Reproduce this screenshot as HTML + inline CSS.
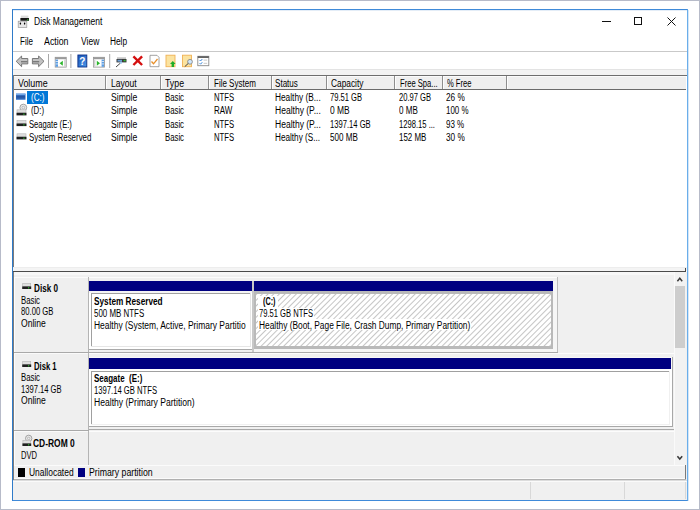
<!DOCTYPE html>
<html><head><meta charset="utf-8">
<style>
*{margin:0;padding:0;box-sizing:border-box}
html,body{width:700px;height:510px;overflow:hidden;background:#fff}
body{position:relative;font-family:"Liberation Sans",sans-serif;font-size:8.5px;color:#000}
.a{position:absolute}
.t{position:absolute;white-space:nowrap;line-height:10px;transform-origin:0 0}
svg{position:absolute;overflow:visible}
</style></head><body>

<div class="a" style="left:0px;top:0px;width:700px;height:1px;background:#b7bbc9;"></div>
<div class="a" style="left:0px;top:0px;width:1px;height:510px;background:#b7bbc9;"></div>
<div class="a" style="left:699px;top:0px;width:1px;height:510px;background:#b7bbc9;"></div>
<div class="a" style="left:0px;top:509px;width:700px;height:1px;background:#b7bbc9;"></div>
<div class="a" style="left:12px;top:9px;width:676px;height:492px;background:#fff;border:1px solid #3f8ad9;border-left-color:#2f7bc9;border-right-color:#6aaeea;"></div>
<div class="a" style="left:688px;top:10px;width:1px;height:491px;background:#d4e6f8;"></div>
<div class="a" style="left:13px;top:10px;width:674px;height:1px;background:#e4edf7;"></div>
<div class="t" style="left:33.6px;top:17.34px;font-size:10px;transform:scaleX(0.8486);">Disk Management</div>
<svg style="left:0;top:0" width="40" height="30">
<rect x="20.8" y="15.6" width="7.6" height="2.4" fill="#dcdcdc"/>
<rect x="20.4" y="18" width="8.6" height="2.8" fill="#161616"/>
<path d="M26.3 20.6 L28.3 18.4 L28.3 20.6Z" fill="#38b038"/>
<rect x="18.2" y="21.2" width="8.6" height="6.2" fill="#e6e6e6" stroke="#9a9a9a" stroke-width="0.7"/>
<ellipse cx="20.4" cy="23.6" rx="0.7" ry="1.1" fill="#000"/>
<ellipse cx="24.6" cy="23.6" rx="0.7" ry="1.1" fill="#000"/>
</svg>
<div class="a" style="left:602px;top:21px;width:8.5px;height:1px;background:#111;"></div>
<div class="a" style="left:634px;top:17px;width:8px;height:8px;border:1px solid #111;"></div>
<svg style="left:667px;top:17px" width="9" height="9"><path d="M0.5 0.5L8.5 8.5M8.5 0.5L0.5 8.5" stroke="#111" stroke-width="1"/></svg>
<div class="t" style="left:19.8px;top:37.44px;font-size:10px;transform:scaleX(0.8000);">File</div>
<div class="t" style="left:44.2px;top:37.44px;font-size:10px;transform:scaleX(0.8813);">Action</div>
<div class="t" style="left:80.7px;top:37.44px;font-size:10px;transform:scaleX(0.8502);">View</div>
<div class="t" style="left:110.2px;top:37.44px;font-size:10px;transform:scaleX(0.8311);">Help</div>
<div class="a" style="left:13px;top:51px;width:674px;height:1px;background:#c9c9c9;"></div>
<div class="a" style="left:13px;top:69px;width:674px;height:1px;background:#e3e3e3;"></div>
<div class="a" style="left:13px;top:70px;width:674px;height:5px;background:#f3f3f3;"></div>
<svg style="left:0;top:0" width="700" height="80">
<!-- back -->
<path d="M16.2 61.3 L21.6 56 L21.6 58.5 L27.8 58.5 L27.8 63.9 L21.6 63.9 L21.6 66.7 Z" fill="#c2c2c2" stroke="#6e6e6e" stroke-width="0.9" stroke-linejoin="round"/>
<rect x="21" y="61" width="6.5" height="1.4" fill="#7a7a7a"/>
<!-- forward -->
<path d="M44 61.3 L38.6 56 L38.6 58.5 L32.4 58.5 L32.4 63.9 L38.6 63.9 L38.6 66.7 Z" fill="#c2c2c2" stroke="#6e6e6e" stroke-width="0.9" stroke-linejoin="round"/>
<rect x="32.7" y="61" width="6.5" height="1.4" fill="#7a7a7a"/>
<rect x="48" y="54" width="1" height="14" fill="#a8a8a8"/>
<!-- console tree -->
<defs><linearGradient id="hg" x1="0" y1="0" x2="1" y2="1"><stop offset="0" stop-color="#1b55b8"/><stop offset="1" stop-color="#4a98e8"/></linearGradient></defs>
<rect x="55.2" y="57.3" width="11" height="9.8" fill="#fff" stroke="#8f8f8f" stroke-width="0.8"/>
<rect x="55.2" y="57.3" width="11" height="1.9" fill="#9a9a9a"/>
<rect x="55.6" y="59.6" width="2.4" height="7.2" fill="#5c9ee4"/>
<rect x="55.6" y="61.2" width="2.4" height="0.7" fill="#fff"/>
<rect x="55.6" y="63.6" width="2.4" height="0.7" fill="#fff"/>
<rect x="64.2" y="59.6" width="1.6" height="7.2" fill="#d0d0d0"/>
<path d="M59.6 63.2 L62.8 60.7 L62.8 65.7Z" fill="#2cb52c"/>
<rect x="70.4" y="54" width="1" height="14" fill="#a8a8a8"/>
<!-- help -->
<rect x="77.9" y="55" width="8.9" height="12" fill="url(#hg)" stroke="#0a2f88" stroke-width="0.9"/>
<text x="82.4" y="64.6" font-family="Liberation Sans" font-weight="bold" font-size="10" fill="#fff" text-anchor="middle">?</text>
<!-- action pane -->
<rect x="93.4" y="57.3" width="11" height="9.8" fill="#fff" stroke="#8f8f8f" stroke-width="0.8"/>
<rect x="93.4" y="57.3" width="11" height="1.9" fill="#9a9a9a"/>
<rect x="101.6" y="59.6" width="2.4" height="7.2" fill="#5c9ee4"/>
<rect x="101.6" y="61.2" width="2.4" height="0.7" fill="#fff"/>
<rect x="101.6" y="63.6" width="2.4" height="0.7" fill="#fff"/>
<rect x="93.8" y="59.6" width="1.6" height="7.2" fill="#d0d0d0"/>
<path d="M100 63.2 L96.8 60.7 L96.8 65.7Z" fill="#2cb52c"/>
<rect x="109.2" y="54" width="1" height="14" fill="#a8a8a8"/>
<!-- connect -->
<rect x="117" y="57.3" width="9" height="1.8" fill="#c4c4c4"/>
<rect x="116.5" y="59" width="10" height="3.4" fill="#3b3b3b"/>
<rect x="117.5" y="59.8" width="4.5" height="1.8" fill="#6aa0d8"/>
<rect x="123.6" y="59.9" width="2" height="1.4" fill="#2fc02f"/>
<path d="M116 67 L120.5 63" stroke="#444" stroke-width="1"/>
<circle cx="121" cy="62.6" r="1.2" fill="#9cc8f0"/>
<!-- red x -->
<path d="M133.4 56.4 L142.1 65 M142.1 56.4 L133.4 65" stroke="#d40f0f" stroke-width="2.4"/>
<!-- doc check -->
<path d="M150 55.3 L157 55.3 L159 57.3 L159 66.7 L150 66.7Z" fill="#fff" stroke="#8c8c8c" stroke-width="0.8"/>
<path d="M151.5 61.5 L153.5 63.8 L157.5 59" stroke="#e8902a" stroke-width="1.3" fill="none"/>
<!-- folder up -->
<rect x="166" y="55.2" width="9" height="11.5" fill="#fbe3a0" stroke="#f0b154" stroke-width="0.9"/>
<path d="M172.8 61 L175.6 64 L174 64 L174 67 L171.6 67 L171.6 64 L170 64Z" fill="#1fae2a"/>
<!-- folder find -->
<rect x="182.5" y="55.2" width="9" height="11.5" fill="#fbe3a0" stroke="#f0b154" stroke-width="0.9"/>
<circle cx="190" cy="61.8" r="2.4" fill="#cfe6fb" stroke="#8a8a8a" stroke-width="0.9"/>
<path d="M184.8 66.6 L188.3 63.4" stroke="#444" stroke-width="1"/>
<!-- properties -->
<rect x="197.8" y="56.3" width="11" height="9.4" fill="#fff" stroke="#8a8a8a" stroke-width="0.9"/>
<rect x="197.8" y="56.3" width="11" height="1.6" fill="#555"/>
<path d="M199.6 60 L200.6 61 L202.3 59" stroke="#2d7fd8" stroke-width="0.9" fill="none"/>
<path d="M199.6 63.2 L200.6 64.2 L202.3 62.2" stroke="#2d7fd8" stroke-width="0.9" fill="none"/>
<rect x="203.6" y="59.6" width="3.6" height="1" fill="#c8c8c8"/>
<rect x="203.6" y="62.8" width="3.6" height="1" fill="#c8c8c8"/>
</svg>
<div class="a" style="left:13px;top:75px;width:674px;height:1px;background:#6e6e6e;"></div>
<div class="a" style="left:13px;top:75px;width:1px;height:192px;background:#7c7c7c;"></div>
<div class="a" style="left:14px;top:76px;width:673px;height:191px;background:#fff;"></div>
<div class="a" style="left:14px;top:76px;width:672px;height:13px;background:#efefef;border-top:1px solid #fbfbfb;"></div>
<div class="a" style="left:14px;top:89px;width:672px;height:1px;background:#6b6b6b;"></div>
<div class="a" style="left:105px;top:76px;width:1px;height:13px;background:#8e8e8e;"></div>
<div class="a" style="left:106px;top:76px;width:1px;height:13px;background:#fdfdfd;"></div>
<div class="a" style="left:160px;top:76px;width:1px;height:13px;background:#8e8e8e;"></div>
<div class="a" style="left:161px;top:76px;width:1px;height:13px;background:#fdfdfd;"></div>
<div class="a" style="left:208px;top:76px;width:1px;height:13px;background:#8e8e8e;"></div>
<div class="a" style="left:209px;top:76px;width:1px;height:13px;background:#fdfdfd;"></div>
<div class="a" style="left:271px;top:76px;width:1px;height:13px;background:#8e8e8e;"></div>
<div class="a" style="left:272px;top:76px;width:1px;height:13px;background:#fdfdfd;"></div>
<div class="a" style="left:326px;top:76px;width:1px;height:13px;background:#8e8e8e;"></div>
<div class="a" style="left:327px;top:76px;width:1px;height:13px;background:#fdfdfd;"></div>
<div class="a" style="left:394px;top:76px;width:1px;height:13px;background:#8e8e8e;"></div>
<div class="a" style="left:395px;top:76px;width:1px;height:13px;background:#fdfdfd;"></div>
<div class="a" style="left:442px;top:76px;width:1px;height:13px;background:#8e8e8e;"></div>
<div class="a" style="left:443px;top:76px;width:1px;height:13px;background:#fdfdfd;"></div>
<div class="a" style="left:506px;top:76px;width:1px;height:13px;background:#8e8e8e;"></div>
<div class="a" style="left:507px;top:76px;width:1px;height:13px;background:#fdfdfd;"></div>
<div class="t" style="left:18.3px;top:79.33px;font-size:10px;transform:scaleX(0.8876);">Volume</div>
<div class="t" style="left:110.7px;top:79.33px;font-size:10px;transform:scaleX(0.8526);">Layout</div>
<div class="t" style="left:164.9px;top:79.33px;font-size:10px;transform:scaleX(0.8766);">Type</div>
<div class="t" style="left:213.6px;top:79.33px;font-size:10px;transform:scaleX(0.8004);">File System</div>
<div class="t" style="left:275.1px;top:79.33px;font-size:10px;transform:scaleX(0.8078);">Status</div>
<div class="t" style="left:330.6px;top:79.33px;font-size:10px;transform:scaleX(0.8329);">Capacity</div>
<div class="t" style="left:399.6px;top:79.33px;font-size:10px;transform:scaleX(0.7620);">Free Spa...</div>
<div class="t" style="left:447.1px;top:79.33px;font-size:10px;transform:scaleX(0.7603);">% Free</div>
<div class="a" style="left:27px;top:91px;width:21px;height:13px;background:#0078d7;"></div>
<div class="t" style="left:30.9px;top:93.03px;font-size:10px;transform:scaleX(0.8108);color:#fff;">(C:)</div>
<div class="t" style="left:110.7px;top:93.03px;font-size:10px;transform:scaleX(0.8602);">Simple</div>
<div class="t" style="left:164.9px;top:93.03px;font-size:10px;transform:scaleX(0.7771);">Basic</div>
<div class="t" style="left:213.6px;top:93.03px;font-size:10px;transform:scaleX(0.7701);">NTFS</div>
<div class="t" style="left:275.1px;top:93.03px;font-size:10px;transform:scaleX(0.8305);">Healthy (B...</div>
<div class="t" style="left:330.3px;top:93.03px;font-size:10px;transform:scaleX(0.7598);">79.51 GB</div>
<div class="t" style="left:399.3px;top:93.03px;font-size:10px;transform:scaleX(0.7598);">20.97 GB</div>
<div class="t" style="left:446.0px;top:93.03px;font-size:10px;transform:scaleX(0.8246);">26 %</div>
<div class="t" style="left:30.9px;top:106.23px;font-size:10px;transform:scaleX(0.7868);">(D:)</div>
<div class="t" style="left:110.7px;top:106.23px;font-size:10px;transform:scaleX(0.8602);">Simple</div>
<div class="t" style="left:164.9px;top:106.23px;font-size:10px;transform:scaleX(0.7771);">Basic</div>
<div class="t" style="left:213.6px;top:106.23px;font-size:10px;transform:scaleX(0.7974);">RAW</div>
<div class="t" style="left:275.1px;top:106.23px;font-size:10px;transform:scaleX(0.8525);">Healthy (P...</div>
<div class="t" style="left:330.3px;top:106.23px;font-size:10px;transform:scaleX(0.8437);">0 MB</div>
<div class="t" style="left:399.3px;top:106.23px;font-size:10px;transform:scaleX(0.8051);">0 MB</div>
<div class="t" style="left:446.0px;top:106.23px;font-size:10px;transform:scaleX(0.7937);">100 %</div>
<div class="t" style="left:28.7px;top:119.53px;font-size:10px;transform:scaleX(0.7640);">Seagate (E:)</div>
<div class="t" style="left:110.7px;top:119.53px;font-size:10px;transform:scaleX(0.8602);">Simple</div>
<div class="t" style="left:164.9px;top:119.53px;font-size:10px;transform:scaleX(0.7771);">Basic</div>
<div class="t" style="left:213.6px;top:119.53px;font-size:10px;transform:scaleX(0.7701);">NTFS</div>
<div class="t" style="left:275.1px;top:119.53px;font-size:10px;transform:scaleX(0.8525);">Healthy (P...</div>
<div class="t" style="left:330.3px;top:119.53px;font-size:10px;transform:scaleX(0.7625);">1397.14 GB</div>
<div class="t" style="left:399.3px;top:119.53px;font-size:10px;transform:scaleX(0.7615);">1298.15 ...</div>
<div class="t" style="left:446.0px;top:119.53px;font-size:10px;transform:scaleX(0.7982);">93 %</div>
<div class="t" style="left:28.7px;top:132.84px;font-size:10px;transform:scaleX(0.7906);">System Reserved</div>
<div class="t" style="left:110.7px;top:132.84px;font-size:10px;transform:scaleX(0.8602);">Simple</div>
<div class="t" style="left:164.9px;top:132.84px;font-size:10px;transform:scaleX(0.7771);">Basic</div>
<div class="t" style="left:213.6px;top:132.84px;font-size:10px;transform:scaleX(0.7701);">NTFS</div>
<div class="t" style="left:275.1px;top:132.84px;font-size:10px;transform:scaleX(0.8178);">Healthy (S...</div>
<div class="t" style="left:330.3px;top:132.84px;font-size:10px;transform:scaleX(0.8064);">500 MB</div>
<div class="t" style="left:399.3px;top:132.84px;font-size:10px;transform:scaleX(0.7948);">152 MB</div>
<div class="t" style="left:446.0px;top:132.84px;font-size:10px;transform:scaleX(0.8246);">30 %</div>
<svg style="left:0;top:0" width="100" height="150">
<rect x="16" y="93.6" width="9.5" height="6.2" fill="#3a78cc"/>
<rect x="16" y="93.6" width="9.5" height="1.3" fill="#7db0ea"/>
<rect x="16.3" y="95.8" width="8.9" height="0.8" fill="#1a3f86"/>
<rect x="16.3" y="97.5" width="8.9" height="0.8" fill="#1a3f86"/>
<circle cx="23.3" cy="107.6" r="3.4" fill="#ececec" stroke="#8e8e8e" stroke-width="0.8"/>
<circle cx="23.3" cy="107.6" r="1.4" fill="none" stroke="#9a9a9a" stroke-width="0.6"/>
<rect x="17.0" y="109.8" width="9" height="3" fill="#dedede" stroke="#b4b4b4" stroke-width="0.6"/><rect x="16.5" y="112.8" width="10" height="2.6" fill="#1e1e1e"/><rect x="23.3" y="113.6" width="1.2" height="1.2" fill="#2fc02f"/><rect x="17.0" y="120.5" width="9" height="3" fill="#dedede" stroke="#b4b4b4" stroke-width="0.6"/><rect x="16.5" y="123.5" width="10" height="2.6" fill="#1e1e1e"/><rect x="23.3" y="124.3" width="1.2" height="1.2" fill="#2fc02f"/><rect x="17.0" y="133.8" width="9" height="3" fill="#dedede" stroke="#b4b4b4" stroke-width="0.6"/><rect x="16.5" y="136.8" width="10" height="2.6" fill="#1e1e1e"/><rect x="23.3" y="137.60000000000002" width="1.2" height="1.2" fill="#2fc02f"/></svg>
<div class="a" style="left:13px;top:267px;width:674px;height:1px;background:#ededed;"></div>
<div class="a" style="left:13px;top:268px;width:674px;height:3px;background:#f4f4f4;"></div>
<div class="a" style="left:13px;top:271px;width:673px;height:1px;background:#4a4a4a;"></div>
<div class="a" style="left:685px;top:268px;width:1px;height:4px;background:#4a4a4a;"></div>
<div class="a" style="left:13px;top:272px;width:1px;height:208px;background:#7c7c7c;"></div>
<div class="a" style="left:14px;top:272px;width:673px;height:208px;background:#f0f0f0;"></div>
<div class="a" style="left:14px;top:272px;width:660px;height:3px;background:#f7f7f7;"></div>
<div class="a" style="left:674px;top:272px;width:12px;height:193px;background:#f2f2f2;"></div>
<div class="a" style="left:675px;top:286px;width:10px;height:62px;background:#cdcdcd;"></div>
<svg style="left:675px;top:276px" width="11" height="9"><path d="M2.4 5.2 L4.8 2.3 L7.2 5.2" stroke="#3a3a3a" stroke-width="1.5" fill="none"/></svg>
<div class="a" style="left:674px;top:272px;width:1px;height:193px;background:#fafafa;"></div>
<svg style="left:675px;top:453px" width="11" height="9"><path d="M2.4 3.2 L4.8 6.1 L7.2 3.2" stroke="#3a3a3a" stroke-width="1.5" fill="none"/></svg>
<div class="a" style="left:14px;top:277px;width:74px;height:75px;background:#efefef;border-top:1px solid #fafafa;border-left:1px solid #fdfdfd;"></div>
<div class="a" style="left:88px;top:277px;width:1px;height:75px;background:#b4b4b4;"></div>
<div class="a" style="left:14px;top:352px;width:75px;height:1px;background:#a9a9a9;"></div>
<div class="a" style="left:14px;top:353px;width:74px;height:77px;background:#efefef;border-top:1px solid #fafafa;border-left:1px solid #fdfdfd;"></div>
<div class="a" style="left:88px;top:353px;width:1px;height:77px;background:#b4b4b4;"></div>
<div class="a" style="left:14px;top:430px;width:75px;height:1px;background:#a9a9a9;"></div>
<div class="a" style="left:14px;top:431px;width:74px;height:34px;background:#efefef;border-top:1px solid #fafafa;border-left:1px solid #fdfdfd;"></div>
<div class="a" style="left:88px;top:431px;width:1px;height:34px;background:#b4b4b4;"></div>
<div class="a" style="left:14px;top:465px;width:75px;height:1px;background:#a9a9a9;"></div>
<div class="t" style="left:33.5px;top:283.94px;font-size:10px;transform:scaleX(0.8142);font-weight:bold;">Disk 0</div>
<div class="t" style="left:20.6px;top:295.84px;font-size:10px;transform:scaleX(0.7771);">Basic</div>
<div class="t" style="left:20.6px;top:307.34px;font-size:10px;transform:scaleX(0.7669);">80.00 GB</div>
<div class="t" style="left:20.6px;top:318.74px;font-size:10px;transform:scaleX(0.8581);">Online</div>
<div class="t" style="left:33.9px;top:361.54px;font-size:10px;transform:scaleX(0.7668);font-weight:bold;">Disk 1</div>
<div class="t" style="left:20.6px;top:373.14px;font-size:10px;transform:scaleX(0.7771);">Basic</div>
<div class="t" style="left:20.6px;top:384.64px;font-size:10px;transform:scaleX(0.7607);">1397.14 GB</div>
<div class="t" style="left:20.6px;top:396.14px;font-size:10px;transform:scaleX(0.8581);">Online</div>
<div class="t" style="left:33.3px;top:438.84px;font-size:10px;transform:scaleX(0.8433);font-weight:bold;">CD-ROM 0</div>
<div class="t" style="left:20.7px;top:450.64px;font-size:10px;transform:scaleX(0.7574);">DVD</div>
<svg style="left:0;top:0" width="100" height="480"><rect x="22.7" y="283.4" width="8" height="3" fill="#dedede" stroke="#b4b4b4" stroke-width="0.6"/><rect x="22.2" y="286.4" width="9" height="2.6" fill="#1e1e1e"/><rect x="28.0" y="287.2" width="1.2" height="1.2" fill="#2fc02f"/><rect x="22.7" y="361.4" width="8" height="3" fill="#dedede" stroke="#b4b4b4" stroke-width="0.6"/><rect x="22.2" y="364.4" width="9" height="2.6" fill="#1e1e1e"/><rect x="28.0" y="365.2" width="1.2" height="1.2" fill="#2fc02f"/><circle cx="28.7" cy="438.4" r="3.2" fill="#ececec" stroke="#8e8e8e" stroke-width="0.8"/><circle cx="28.7" cy="438.4" r="1.3" fill="none" stroke="#9a9a9a" stroke-width="0.6"/><rect x="22.9" y="440.4" width="7.800000000000001" height="3" fill="#dedede" stroke="#b4b4b4" stroke-width="0.6"/><rect x="22.4" y="443.4" width="8.8" height="2.6" fill="#1e1e1e"/><rect x="28.0" y="444.2" width="1.2" height="1.2" fill="#2fc02f"/></svg>
<div class="a" style="left:89px;top:277px;width:468px;height:75px;background:#f0f0f0;border-top:1px solid #fcfcfc;"></div>
<div class="a" style="left:557px;top:277px;width:1px;height:76px;background:#bdbdbd;"></div>
<div class="a" style="left:89px;top:352px;width:469px;height:1px;background:#a9a9a9;"></div>
<div class="a" style="left:89px;top:281px;width:163px;height:10px;background:#000080;"></div>
<div class="a" style="left:89px;top:291px;width:163px;height:58px;background:#fff;border-top:2px solid #f4f4f4;"></div>
<div class="a" style="left:91px;top:293px;width:160px;height:1px;background:#a0a0a0;"></div>
<div class="a" style="left:91px;top:293px;width:1px;height:53px;background:#a0a0a0;"></div>
<div class="a" style="left:250px;top:293px;width:1px;height:54px;background:#e6e6e6;"></div>
<div class="a" style="left:91px;top:346px;width:160px;height:1px;background:#e6e6e6;"></div>
<div class="a" style="left:89px;top:349px;width:163px;height:1px;background:#a9a9a9;"></div>
<div class="t" style="left:94.4px;top:297.14px;font-size:10px;transform:scaleX(0.8228);font-weight:bold;">System Reserved</div>
<div class="t" style="left:94.4px;top:308.84px;font-size:10px;transform:scaleX(0.7924);">500 MB NTFS</div>
<div class="t" style="left:94.4px;top:320.54px;font-size:10px;transform:scaleX(0.8446);">Healthy (System, Active, Primary Partitio</div>
<div class="a" style="left:252px;top:281px;width:2px;height:71px;background:#c8c8c8;"></div>
<div class="a" style="left:254px;top:281px;width:299px;height:10px;background:#000080;"></div>
<div class="a" style="left:254px;top:291px;width:299px;height:58px;background:#b9b9b9;"></div>
<svg style="left:256px;top:294px" width="295" height="52">
<defs><pattern id="h" width="4" height="4" patternUnits="userSpaceOnUse" patternTransform="rotate(45)">
<rect width="4" height="4" fill="#fff"/><rect x="0" y="0" width="0.95" height="4" fill="#c2c2c2"/></pattern></defs>
<rect width="295" height="52" fill="url(#h)"/></svg>
<div class="a" style="left:553px;top:281px;width:4px;height:71px;background:#f6f6f6;"></div>
<div class="a" style="left:258px;top:296px;width:20px;height:12px;background:#fff;"></div>
<div class="a" style="left:258px;top:308px;width:56px;height:10.5px;background:#fff;"></div>
<div class="a" style="left:258px;top:318.5px;width:213px;height:11.5px;background:#fff;"></div>
<div class="a" style="left:254px;top:349px;width:303px;height:3px;background:#f6f6f6;"></div>
<div class="t" style="left:263.0px;top:297.34px;font-size:10px;transform:scaleX(0.7267);font-weight:bold;">(C:)</div>
<div class="t" style="left:259.0px;top:308.84px;font-size:10px;transform:scaleX(0.7590);">79.51 GB NTFS</div>
<div class="t" style="left:259.0px;top:320.54px;font-size:10px;transform:scaleX(0.8356);">Healthy (Boot, Page File, Crash Dump, Primary Partition)</div>
<div class="a" style="left:89px;top:353px;width:585px;height:76px;background:#f0f0f0;border-top:1px solid #fcfcfc;"></div>
<div class="a" style="left:89px;top:429px;width:585px;height:1px;background:#a9a9a9;"></div>
<div class="a" style="left:89px;top:357px;width:584px;height:70px;background:#f8f8f8;"></div>
<div class="a" style="left:89px;top:358px;width:582px;height:11px;background:#000080;"></div>
<div class="a" style="left:89px;top:369px;width:583px;height:57px;background:#fff;"></div>
<div class="a" style="left:91px;top:371px;width:579px;height:1px;background:#a0a0a0;"></div>
<div class="a" style="left:91px;top:371px;width:1px;height:54px;background:#a0a0a0;"></div>
<div class="a" style="left:669px;top:371px;width:1px;height:54px;background:#f0f0f0;"></div>
<div class="a" style="left:91px;top:424px;width:579px;height:1px;background:#f0f0f0;"></div>
<div class="a" style="left:672px;top:357px;width:1px;height:70px;background:#a8a8a8;"></div>
<div class="a" style="left:89px;top:426px;width:584px;height:1px;background:#a8a8a8;"></div>
<div class="t" style="left:94.4px;top:374.34px;font-size:10px;transform:scaleX(0.7974);font-weight:bold;">Seagate &nbsp;(E:)</div>
<div class="t" style="left:94.4px;top:385.84px;font-size:10px;transform:scaleX(0.7669);">1397.14 GB NTFS</div>
<div class="t" style="left:94.4px;top:397.54px;font-size:10px;transform:scaleX(0.8580);">Healthy (Primary Partition)</div>
<div class="a" style="left:89px;top:431px;width:585px;height:34px;background:#f0f0f0;border-top:1px solid #fcfcfc;"></div>
<div class="a" style="left:14px;top:465px;width:672px;height:14px;background:#f0f0f0;"></div>
<div class="a" style="left:14px;top:465px;width:671px;height:1px;background:#fbfbfb;"></div>
<div class="a" style="left:685px;top:465px;width:1px;height:15px;background:#7a7a7a;"></div>
<div class="a" style="left:14px;top:478px;width:671px;height:1px;background:#fbfbfb;"></div>
<div class="a" style="left:18px;top:467.5px;width:7px;height:9px;background:#000;"></div>
<div class="t" style="left:29.3px;top:467.74px;font-size:10px;transform:scaleX(0.8443);">Unallocated</div>
<div class="a" style="left:78.3px;top:467.5px;width:7px;height:9px;background:#000080;"></div>
<div class="t" style="left:89.0px;top:467.74px;font-size:10px;transform:scaleX(0.8736);">Primary partition</div>
<div class="a" style="left:14px;top:479px;width:672px;height:1px;background:#b0b0b0;"></div>
<div class="a" style="left:13px;top:480px;width:674px;height:1px;background:#dcdcdc;"></div>
<div class="a" style="left:13px;top:481px;width:674px;height:19px;background:#f0f0f0;"></div>
<div class="a" style="left:13px;top:481px;width:674px;height:1px;background:#fafafa;"></div>
<div class="a" style="left:530px;top:482px;width:1px;height:17px;background:#d8d8d8;"></div>
<div class="a" style="left:624px;top:482px;width:1px;height:17px;background:#d8d8d8;"></div>
<div class="a" style="left:685px;top:482px;width:1px;height:17px;background:#d8d8d8;"></div>
</body></html>
